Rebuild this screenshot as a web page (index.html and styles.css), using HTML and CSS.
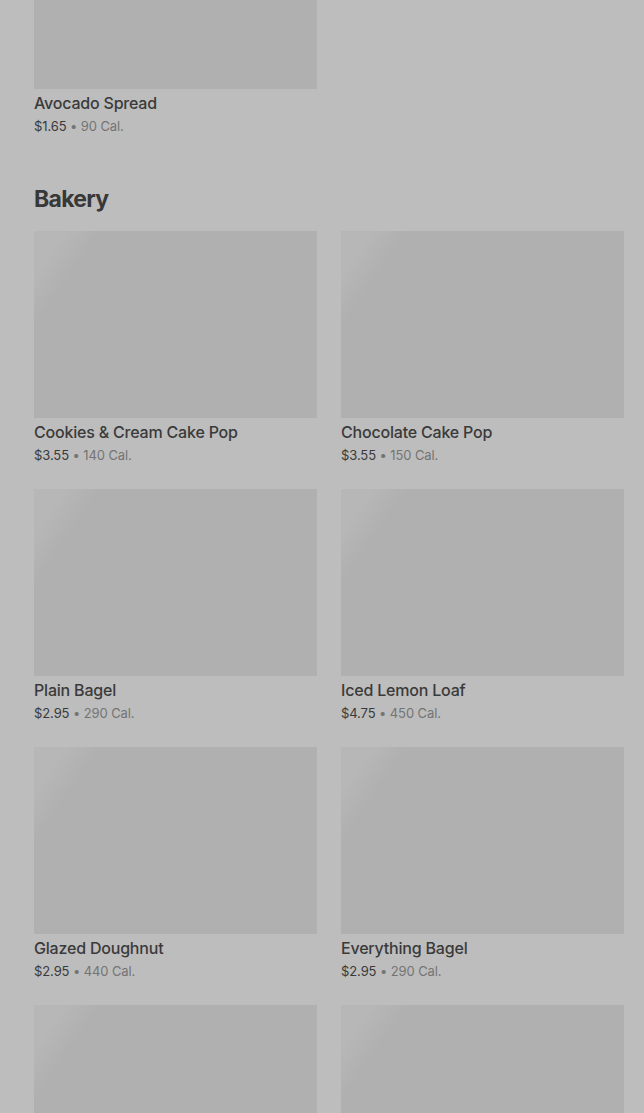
FILE: index.html
```html
<html>
    <head>
        <title>Menu</title>
        <link rel="stylesheet" href="styles.css">
    </head>
    <body>
        <div class="menu">
            <div class="section">
                <div class="grid">
                    <div class="item">
                        <div class="thumb"></div>
                        <div class="name">Avocado Spread</div>
                        <div class="meta"><span class="price">$1.65</span> • 90 Cal.</div>
                    </div>
                </div>
            </div>
            <div class="section">
                <h2>Bakery</h2>
                <div class="grid">
                    <div class="item">
                        <div class="thumb"></div>
                        <div class="name">Cookies &amp; Cream Cake Pop</div>
                        <div class="meta"><span class="price">$3.55</span> • 140 Cal.</div>
                    </div>
                    <div class="item">
                        <div class="thumb"></div>
                        <div class="name">Chocolate Cake Pop</div>
                        <div class="meta"><span class="price">$3.55</span> • 150 Cal.</div>
                    </div>
                    <div class="item">
                        <div class="thumb"></div>
                        <div class="name">Plain Bagel</div>
                        <div class="meta"><span class="price">$2.95</span> • 290 Cal.</div>
                    </div>
                    <div class="item">
                        <div class="thumb"></div>
                        <div class="name">Iced Lemon Loaf</div>
                        <div class="meta"><span class="price">$4.75</span> • 450 Cal.</div>
                    </div>
                    <div class="item">
                        <div class="thumb"></div>
                        <div class="name">Glazed Doughnut</div>
                        <div class="meta"><span class="price">$2.95</span> • 440 Cal.</div>
                    </div>
                    <div class="item">
                        <div class="thumb"></div>
                        <div class="name">Everything Bagel</div>
                        <div class="meta"><span class="price">$2.95</span> • 290 Cal.</div>
                    </div>
                    <div class="item">
                        <div class="thumb"></div>
                    </div>
                    <div class="item">
                        <div class="thumb"></div>
                    </div>
                </div>
            </div>
        </div>
    </body>
</html>
```

FILE: styles.css
```css
body{
    margin: 0;
    background-color: #bdbdbd;
    font-family: Inter, 'Liberation Sans', sans-serif;
    overflow: hidden;
}
.menu{
    /* page is scrolled part way into the previous section */
    margin-top: -98px;
    padding: 0 20px 0 34px;
    display: flex;
    flex-direction: column;
    gap: 46px;
}
h2{
    margin: 0 0 16px 0;
    font-size: 23px;
    line-height: 32px;
    font-weight: 700;
    letter-spacing: -0.7px;
    color: #383838;
}
.grid{
    display: grid;
    grid-template-columns: 283px 283px;
    column-gap: 24px;
    row-gap: 23px;
}
.thumb{
    height: 187px;
    background: linear-gradient(125deg, #b7b7b7 0, #b7b7b7 25px, #b0b0b0 55px);
}
.name{
    padding-top: 2px;
    font-size: 16px;
    line-height: 24px;
    font-weight: 500;
    letter-spacing: -0.2px;
    color: #3a3a3a;
}
.meta{
    font-size: 13px;
    line-height: 22px;
    letter-spacing: -0.1px;
    color: #747474;
}
.price{
    color: #3a3a3a;
}
```
